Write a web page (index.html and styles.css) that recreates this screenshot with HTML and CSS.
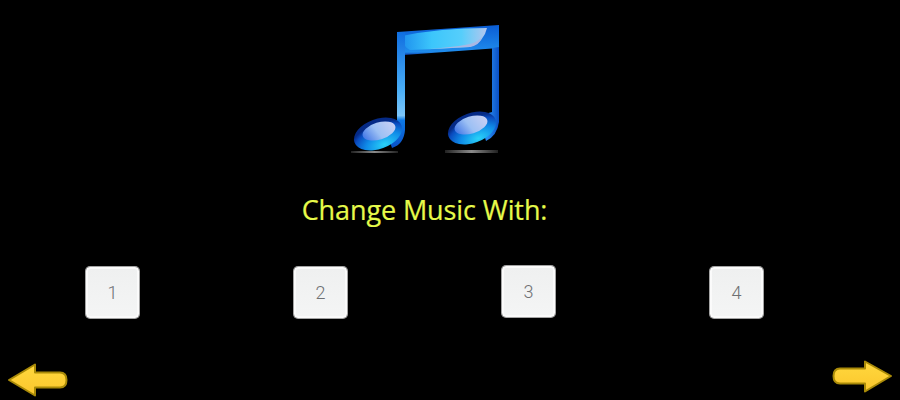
FILE: index.html
```html
<!doctype html>
<html lang="en">
<head>
    <meta charset="utf-8">
    <title>Change Music</title>
    <link rel="stylesheet" href="styles.css">
</head>
<body>
    <div class="screen">
        <!-- viewBox uses page coordinates so the note is easy to compare -->
        <svg class="note" viewBox="340 15 220 145" aria-hidden="true">
            <defs>
                <linearGradient id="barFill" x1="0" y1="0" x2="0" y2="1">
                    <stop offset="0" stop-color="#0a5cd4"/>
                    <stop offset=".9" stop-color="#1f8cec"/>
                    <stop offset="1" stop-color="#0a3fae"/>
                </linearGradient>
                <linearGradient id="swoosh" x1="0" y1="0" x2="1" y2="0">
                    <stop offset="0" stop-color="#1e90ee"/>
                    <stop offset=".35" stop-color="#3cc6fb"/>
                    <stop offset=".7" stop-color="#56cefb"/>
                    <stop offset="1" stop-color="#b4c6ee"/>
                </linearGradient>
                <linearGradient id="stemRight" x1="0" y1="0" x2="1" y2="0">
                    <stop offset="0" stop-color="#0d6fe6"/>
                    <stop offset=".45" stop-color="#2a8ef2"/>
                    <stop offset="1" stop-color="#0a4fc4"/>
                </linearGradient>
                <linearGradient id="stemLeft" x1="0" y1="0" x2="0" y2="1">
                    <stop offset="0" stop-color="#0f6ee0"/>
                    <stop offset=".5" stop-color="#4aaef6"/>
                    <stop offset=".72" stop-color="#7cc6fa"/>
                    <stop offset=".76" stop-color="#0d78e4"/>
                    <stop offset="1" stop-color="#0a52c8"/>
                </linearGradient>
                <radialGradient id="headFill" cx=".55" cy=".9" r=".75">
                    <stop offset="0" stop-color="#2ad2f8"/>
                    <stop offset=".5" stop-color="#0f8ce8"/>
                    <stop offset=".85" stop-color="#0a4cc0"/>
                    <stop offset="1" stop-color="#052a86"/>
                </radialGradient>
                <linearGradient id="headGlow" x1="0" y1=".6" x2="1" y2=".4">
                    <stop offset="0" stop-color="#4478e6"/>
                    <stop offset=".45" stop-color="#9cc0f4"/>
                    <stop offset="1" stop-color="#c8d0f4"/>
                </linearGradient>
                <linearGradient id="shadow" x1="0" y1="0" x2="1" y2="0">
                    <stop offset="0" stop-color="#222"/>
                    <stop offset=".5" stop-color="#8a8a8a"/>
                    <stop offset="1" stop-color="#222"/>
                </linearGradient>
                <linearGradient id="arrowFill" x1="0" y1="0" x2="0" y2="1">
                    <stop offset="0" stop-color="#ffd83e"/>
                    <stop offset="1" stop-color="#fbc62c"/>
                </linearGradient>
            </defs>
            <rect x="351" y="151" width="47" height="2" fill="url(#shadow)"/>
            <rect x="445" y="150" width="53" height="3" fill="url(#shadow)"/>
            <path d="M397 32 L499 25 L499 48 L404 55 Z" fill="url(#barFill)"/>
            <path d="M402 36 Q440 28 487 28 Q484 42 470 47 Q440 49 410 50 Q402 46 402 36 Z" fill="url(#swoosh)"/>
            <path d="M412 50 Q450 48 470 44 Q478 42 482 37 Q480 45 470 47 Z" fill="#a8b8e4"/>
            <path d="M397 32 L405 32 L405 130 Q404 144 392 148 L383 122 L397 120 Z" fill="url(#stemLeft)"/>
            <path d="M492 48 L499 47 L499 122 Q497 136 486 141 L478 116 L492 112 Z" fill="url(#stemRight)"/>
            <ellipse cx="378" cy="134" rx="25" ry="15" transform="rotate(-20 378 134)" fill="url(#headFill)"/>
            <ellipse cx="472" cy="128" rx="25" ry="15" transform="rotate(-20 472 128)" fill="url(#headFill)"/>
            <ellipse cx="379" cy="131" rx="17" ry="8.500" transform="rotate(-17 379 131)" fill="url(#headGlow)"/>
            <ellipse cx="471" cy="125" rx="17" ry="8.500" transform="rotate(-17 471 125)" fill="url(#headGlow)"/>
        </svg>

        <h1 class="title">Change Music With:</h1>

        <div class="keys">
            <button class="key">1</button>
            <button class="key">2</button>
            <button class="key key-up">3</button>
            <button class="key">4</button>
        </div>

        <div class="nav">
            <svg class="arrow arrow-back" viewBox="0 0 60 34" aria-hidden="true">
                <path d="M1 17 L27 1.500 L27 9.500 L52 9.500 Q58.500 9.500 58.500 17 Q58.500 24.500 52 24.500 L27 24.500 L27 32.500 Z" fill="url(#arrowFill)" stroke="#a98a08" stroke-width="2" stroke-linejoin="round"/>
            </svg>
            <svg class="arrow arrow-next" viewBox="0 0 60 34" aria-hidden="true">
                <path d="M59 16 L33 1.500 L33 8.500 L8 8.500 Q1.500 8.500 1.500 16 Q1.500 23.500 8 23.500 L33 23.500 L33 31.500 Z" fill="url(#arrowFill)" stroke="#a98a08" stroke-width="2" stroke-linejoin="round"/>
            </svg>
        </div>
    </div>
</body>
</html>
```
FILE: styles.css
```css
*{
    margin:0;
    padding:0;
    box-sizing:border-box;
}
body{
    background:#000;
}
.screen{
    width:900px;
    height:400px;
    overflow:hidden;
    display:flex;
    flex-direction:column;
    align-items:center;
    background:#000;
}
.note{
    display:block;
    width:220px;
    height:145px;
    margin-top:15px;
}
.title{
    height:40px;
    margin-top:30px;
    margin-right:51px;
    font-family:"Open Sans","Liberation Sans",sans-serif;
    font-size:27px;
    font-weight:400;
    letter-spacing:-0.1px;
    line-height:40px;
    color:#e6fa4a;
    -webkit-text-stroke:0.2px #e6fa4a;
}
.keys{
    display:flex;
    gap:155px;
    align-items:flex-start;
    width:100%;
    height:129px;
    padding:37px 0 0 86px;
}
.key{
    width:53px;
    height:51px;
    background:linear-gradient(#eff0f0,#f4f5f5);
    border:2px solid #fbfbfb;
    border-radius:4px;
    box-shadow:0 0 0 1px #a4a4a4;
    font-family:Roboto,"Liberation Sans",sans-serif;
    font-size:18px;
    font-weight:300;
    color:#6e7072;
}
.key-up{
    margin-top:-1px;
}
.nav{
    display:flex;
    justify-content:space-between;
    align-items:flex-start;
    width:100%;
    padding:0 8px;
}
.arrow{
    display:block;
    width:60px;
    height:34px;
}
.arrow-back{
    margin-top:4px;
}
.arrow-next{
    margin-top:1px;
}
```
